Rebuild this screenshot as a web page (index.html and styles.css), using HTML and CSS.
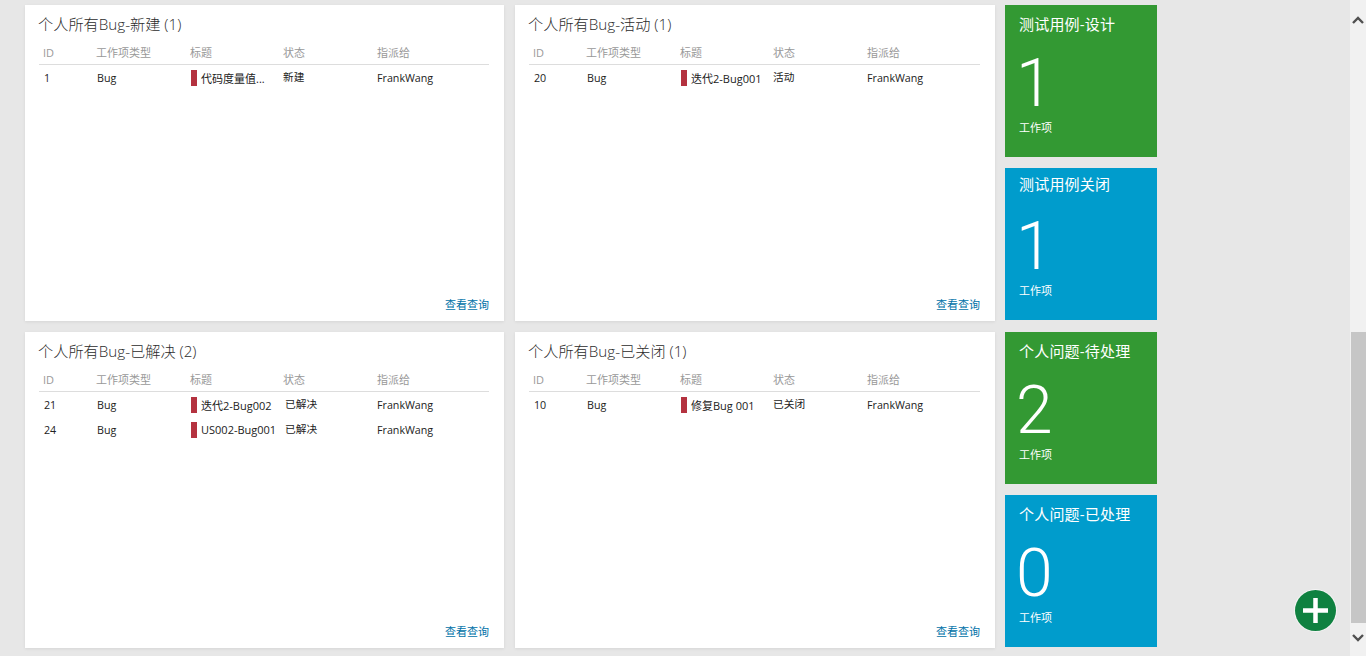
FILE: index.html
```html
<!DOCTYPE html>
<html lang="zh-CN">
<head>
  <meta charset="UTF-8">
  <meta name="viewport" content="width=device-width, initial-scale=1.0">
  <title>仪表板</title>
  <link rel="stylesheet" href="styles.css">
</head>
<body>

  <div class="page">
    <div class="dashboard">

      <div class="card">
        <h2 class="card-title">个人所有Bug-新建 (1)</h2>
        <div class="row head">
          <span>ID</span><span>工作项类型</span><span>标题</span><span>状态</span><span>指派给</span>
        </div>
        <div class="row">
          <span class="cell-id">1</span><span>Bug</span>
          <span class="cell-title"><i class="bar"></i><em>代码度量值...</em></span>
          <span class="cell-state">新建</span><span>FrankWang</span>
        </div>
        <a class="query-link">查看查询</a>
      </div>

      <div class="card">
        <h2 class="card-title">个人所有Bug-活动 (1)</h2>
        <div class="row head">
          <span>ID</span><span>工作项类型</span><span>标题</span><span>状态</span><span>指派给</span>
        </div>
        <div class="row">
          <span class="cell-id">20</span><span>Bug</span>
          <span class="cell-title"><i class="bar"></i><em>迭代2-Bug001</em></span>
          <span class="cell-state">活动</span><span>FrankWang</span>
        </div>
        <a class="query-link">查看查询</a>
      </div>

      <div class="tiles">
        <div class="tile green">
          <div class="tile-title">测试用例-设计</div>
          <div class="tile-num">1</div>
          <div class="tile-label">工作项</div>
        </div>
        <div class="tile blue raised">
          <div class="tile-title">测试用例关闭</div>
          <div class="tile-num">1</div>
          <div class="tile-label">工作项</div>
        </div>
      </div>

      <div class="card">
        <h2 class="card-title">个人所有Bug-已解决 (2)</h2>
        <div class="row head">
          <span>ID</span><span>工作项类型</span><span>标题</span><span>状态</span><span>指派给</span>
        </div>
        <div class="row">
          <span class="cell-id">21</span><span>Bug</span>
          <span class="cell-title"><i class="bar"></i><em>迭代2-Bug002</em></span>
          <span class="cell-state wide">已解决</span><span>FrankWang</span>
        </div>
        <div class="row">
          <span class="cell-id">24</span><span>Bug</span>
          <span class="cell-title"><i class="bar"></i><em>US002-Bug001</em></span>
          <span class="cell-state wide">已解决</span><span>FrankWang</span>
        </div>
        <a class="query-link">查看查询</a>
      </div>

      <div class="card">
        <h2 class="card-title">个人所有Bug-已关闭 (1)</h2>
        <div class="row head">
          <span>ID</span><span>工作项类型</span><span>标题</span><span>状态</span><span>指派给</span>
        </div>
        <div class="row">
          <span class="cell-id">10</span><span>Bug</span>
          <span class="cell-title"><i class="bar"></i><em>修复Bug 001</em></span>
          <span class="cell-state">已关闭</span><span>FrankWang</span>
        </div>
        <a class="query-link">查看查询</a>
      </div>

      <div class="tiles">
        <div class="tile green">
          <div class="tile-title">个人问题-待处理</div>
          <div class="tile-num">2</div>
          <div class="tile-label">工作项</div>
        </div>
        <div class="tile blue">
          <div class="tile-title">个人问题-已处理</div>
          <div class="tile-num">0</div>
          <div class="tile-label">工作项</div>
        </div>
      </div>

    </div>

    <div class="scrollbar">
      <svg class="arrow" width="16" height="10" viewBox="0 0 16 10"><path d="M3 8 L8 3 L13 8" fill="none" stroke="#505050" stroke-width="2.4"/></svg>
      <div class="track"><div class="thumb"></div></div>
      <svg class="arrow" width="16" height="10" viewBox="0 0 16 10"><path d="M3 2 L8 7 L13 2" fill="none" stroke="#505050" stroke-width="2.4"/></svg>
    </div>
  </div>

  <button class="add-btn" aria-label="添加">
    <svg width="41" height="41" viewBox="0 0 41 41"><path d="M20.5 8 V33 M8 20.5 H33" stroke="#fff" stroke-width="4.5" fill="none"/></svg>
  </button>

</body>
</html>
```

FILE: styles.css
```css
body, html {
  margin: 0;
  padding: 0;
  height: 100%;
  overflow: hidden;
}

body {
  background-color: #e7e7e7;
  font-family: "Open Sans", "Noto Sans CJK SC", sans-serif;
  color: #222;
}

.page {
  display: flex;
  justify-content: space-between;
  height: 656px;
}

.dashboard {
  display: grid;
  grid-template-columns: 479px 480px 152px;
  grid-template-rows: 316px 316px;
  column-gap: 11px;
  row-gap: 11px;
  padding: 5px 0 0 25px;
  align-content: start;
}

.card {
  position: relative;
  background-color: #fff;
  padding: 0 15px 0 14px;
  box-shadow: 0 1px 3px rgba(0, 0, 0, 0.08);
}

.card-title {
  margin: 0 0 0 -1px;
  padding-top: 9px;
  height: 29px;
  line-height: 21px;
  font-size: 15.2px;
  font-weight: 300;
  color: #2b2b2b;
}

.row {
  display: grid;
  grid-template-columns: 53px 94px 92px 94px 1fr;
  height: 25px;
  align-items: center;
  padding-left: 5px;
  font-size: 10.7px;
  color: #222;
  white-space: nowrap;
}

.row.head {
  grid-template-columns: 53px 94px 93px 94px 1fr;
  height: 21px;
  line-height: 20px;
  align-items: start;
  padding-left: 4px;
  border-bottom: 1px solid #ddd;
  font-size: 11px;
  color: #999;
}

.cell-title {
  display: flex;
  align-items: center;
  gap: 4px;
}

.cell-title em {
  font-style: normal;
  font-size: 11px;
}

.cell-state {
  position: relative;
  top: -1px;
}

.cell-state.wide {
  left: 2px;
}

.bar {
  display: block;
  width: 6px;
  height: 16px;
  background-color: #b4323f;
}

.query-link {
  position: absolute;
  right: 15px;
  bottom: 9px;
  font-size: 11px;
  color: #0072a8;
}

.tiles {
  display: flex;
  flex-direction: column;
  gap: 11px;
  width: 152px;
  margin-left: -1px;
}

.tile {
  height: 152px;
  box-sizing: border-box;
  padding: 9px 14px;
  color: #fff;
}

.tile.raised {
  padding-top: 6px;
}

.tile.green {
  background-color: #339933;
}

.tile.blue {
  background-color: #009ccc;
}

.tile-title {
  font-size: 15px;
  line-height: 20px;
  letter-spacing: 0.2px;
}

.tile-num {
  font-family: Roboto, sans-serif;
  font-size: 66px;
  font-weight: 300;
  line-height: 76px;
  margin: 12px 0 0 -3px;
}

.raised .tile-num {
  margin-top: 15px;
}

.tile-label {
  font-size: 11px;
  line-height: 16px;
  margin-top: -2px;
}

.scrollbar {
  width: 16px;
  background-color: #f1f1f1;
  display: flex;
  flex-direction: column;
  align-items: center;
  justify-content: space-between;
  padding: 15px 0 13px;
  box-sizing: border-box;
}

.track {
  flex: 1;
  width: 100%;
  padding: 307px 0 10px 1px;
  box-sizing: border-box;
  display: flex;
}

.thumb {
  flex: 1;
  background-color: #c6c6c6;
}

.arrow {
  display: block;
}

.add-btn {
  position: absolute;
  left: 1295px;
  top: 590px;
  width: 41px;
  height: 41px;
  padding: 0;
  border: none;
  border-radius: 50%;
  background-color: #0f8140;
  box-shadow: 0 0 0 1px #f4f4f4;
  cursor: pointer;
}

.add-btn svg {
  display: block;
}
```
